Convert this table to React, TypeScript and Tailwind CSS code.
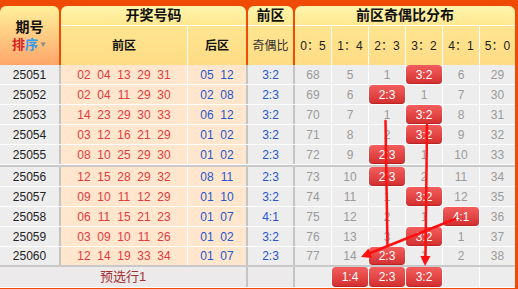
import React from 'react';

type Row = { id: string; f: string[]; b: string[]; r: string; d: (number | string)[] };

const rows: Row[] = [
  { id: '25051', f: ['02', '04', '13', '29', '31'], b: ['05', '12'], r: '3:2', d: [68, 5, 1, '3:2', 6, 29] },
  { id: '25052', f: ['02', '04', '11', '29', '30'], b: ['02', '08'], r: '2:3', d: [69, 6, '2:3', 1, 7, 30] },
  { id: '25053', f: ['14', '23', '29', '30', '33'], b: ['06', '12'], r: '3:2', d: [70, 7, 1, '3:2', 8, 31] },
  { id: '25054', f: ['03', '12', '16', '21', '29'], b: ['01', '02'], r: '3:2', d: [71, 8, 2, '3:2', 9, 32] },
  { id: '25055', f: ['08', '10', '25', '29', '30'], b: ['01', '02'], r: '2:3', d: [72, 9, '2:3', 1, 10, 33] },
  { id: '25056', f: ['12', '15', '28', '29', '32'], b: ['08', '11'], r: '2:3', d: [73, 10, '2:3', 2, 11, 34] },
  { id: '25057', f: ['09', '10', '11', '12', '29'], b: ['01', '10'], r: '3:2', d: [74, 11, 1, '3:2', 12, 35] },
  { id: '25058', f: ['06', '11', '15', '21', '23'], b: ['01', '07'], r: '4:1', d: [75, 12, 2, 1, '4:1', 36] },
  { id: '25059', f: ['03', '09', '10', '11', '26'], b: ['01', '02'], r: '3:2', d: [76, 13, 3, '3:2', 1, 37] },
  { id: '25060', f: ['12', '14', '19', '33', '34'], b: ['01', '07'], r: '2:3', d: [77, 14, '2:3', 1, 2, 38] },
];

const heads = ['0：5', '1：4', '2：3', '3：2', '4：1', '5：0'];

function Badge({ t }: { t: string }) {
  return (
    <span className="absolute inset-0 rounded-[4px] bg-linear-to-b from-[#f45d5d] to-[#d22e2e] shadow-[inset_0_-1px_0_rgba(120,0,0,0.25)] text-white text-[12px] flex items-center justify-center">
      {t}
    </span>
  );
}

function DistCells({ d }: { d: (number | string | null)[] }) {
  return (
    <>
      {d.map((v, i) => (
        <div
          key={i}
          className={
            i === 5
              ? 'w-[35px] shrink-0 relative bg-[#eeeded] flex items-center justify-center text-[12px] text-[#9a9a9a]'
              : 'w-[37px] shrink-0 relative border-r border-white bg-[#eeeded] flex items-center justify-center text-[12px] text-[#9a9a9a]'
          }
        >
          {typeof v === 'string' ? <Badge t={v} /> : v}
        </div>
      ))}
    </>
  );
}

function DataRow({ r, last }: { r: Row; last: boolean }) {
  return (
    <div className={last ? 'flex h-[18px]' : 'flex h-[20px] border-b border-white'}>
      <div className="w-[61px] shrink-0 border-r-2 border-[#c4c4c4] bg-[#eeeded] flex items-center justify-center text-[12px] text-[#222]">
        {r.id}
      </div>
      <div className="w-[127px] shrink-0 border-r border-white bg-[#ffe6cd] flex items-center justify-center text-[12px] text-[#e23b3e]">
        {r.f.map((n, i) => (
          <span key={i} className="w-[20px] text-center">{n}</span>
        ))}
      </div>
      <div className="w-[60px] shrink-0 border-r-2 border-[#c4c4c4] bg-[#ffe6cd] flex items-center justify-center text-[12px] text-[#2456d0]">
        {r.b.map((n, i) => (
          <span key={i} className="w-[20px] text-center">{n}</span>
        ))}
      </div>
      <div className="w-[47px] shrink-0 border-r-2 border-[#c4c4c4] bg-[#eeeded] flex items-center justify-center text-[12px] text-[#2456d0]">
        {r.r}
      </div>
      <DistCells d={r.d} />
    </div>
  );
}

export default function App() {
  return (
    <div className="relative w-[518px] h-[289px] overflow-hidden bg-[#ef4a06] pt-[6px] font-['Liberation_Sans','Noto_Sans_CJK_SC',sans-serif]">
      {/* header */}
      <div className="flex h-[59px]">
        <div className="w-[59px] shrink-0 rounded-t-[6px] bg-linear-to-b from-[#fff09c] to-[#ffa56a] flex flex-col items-center justify-center">
          <div className="text-[14px] font-bold text-[#111] leading-[18px]">期号</div>
          <div className="text-[13px] font-bold leading-[18px] flex items-center">
            <span className="text-[#d42424]">排</span>
            <span className="text-[#2f9cf0]">序</span>
            <span className="text-[#8a8a8a] text-[8px] ml-[1px]">▼</span>
          </div>
        </div>
        <div className="w-[2px] shrink-0" />
        <div className="w-[185px] shrink-0 flex flex-col">
          <div className="h-[20px] shrink-0 rounded-t-[6px] border-b border-white bg-linear-to-b from-[#fff5ad] to-[#ffe88f] flex items-center justify-center text-[14px] font-bold text-[#111]">
            开奖号码
          </div>
          <div className="flex-1 flex bg-linear-to-b from-[#ffe590] to-[#ffdc86]">
            <div className="w-[127px] shrink-0 border-r border-white flex items-center justify-center text-[12px] font-bold text-[#111]">前区</div>
            <div className="flex-1 flex items-center justify-center text-[12px] font-bold text-[#111]">后区</div>
          </div>
        </div>
        <div className="w-[2px] shrink-0" />
        <div className="w-[45px] shrink-0 flex flex-col">
          <div className="h-[20px] shrink-0 rounded-t-[6px] border-b border-white bg-linear-to-b from-[#fff5ad] to-[#ffe88f] flex items-center justify-center text-[14px] font-bold text-[#111]">
            前区
          </div>
          <div className="flex-1 flex items-center justify-center bg-linear-to-b from-[#ffe590] to-[#ffdc86] text-[12px] text-[#333]">奇偶比</div>
        </div>
        <div className="w-[2px] shrink-0" />
        <div className="w-[220px] shrink-0 flex flex-col">
          <div className="h-[20px] shrink-0 rounded-t-[6px] border-b border-white bg-linear-to-b from-[#fff5ad] to-[#ffe88f] flex items-center justify-center text-[14px] font-bold text-[#111]">
            前区奇偶比分布
          </div>
          <div className="flex-1 flex bg-linear-to-b from-[#ffe590] to-[#ffdc86]">
            {heads.map((h, i) => (
              <div
                key={i}
                className={
                  i === 5
                    ? 'w-[35px] shrink-0 flex items-center justify-center text-[12px] text-[#222]'
                    : 'w-[37px] shrink-0 border-r border-white flex items-center justify-center text-[12px] text-[#222]'
                }
              >
                {h}
              </div>
            ))}
          </div>
        </div>
      </div>

      {/* body */}
      <div className="w-[515px]">
        {rows.slice(0, 5).map((r) => (
          <DataRow key={r.id} r={r} last={false} />
        ))}
        <div className="h-[2px] bg-[#c9c9c9]" />
        {rows.slice(5).map((r, i) => (
          <DataRow key={r.id} r={r} last={i === 4} />
        ))}
        <div className="h-[2px] bg-[#c9c9c9]" />
        <div className="flex h-[20px]">
          <div className="w-[248px] shrink-0 border-r-2 border-[#c4c4c4] bg-[#eceaea] flex items-center justify-center text-[13px] text-[#a33030]">
            预选行1
          </div>
          <div className="w-[47px] shrink-0 border-r-2 border-[#c4c4c4] bg-[#eceaea]" />
          <DistCells d={[null, '1:4', '2:3', '3:2', null, null]} />
        </div>
        <div className="h-[1px] bg-white" />
      </div>

      {/* arrows */}
      <svg className="absolute top-0 left-0 pointer-events-none" width="518" height="289" viewBox="0 0 518 289">
        <g stroke="#ff1010" strokeWidth="2.5" fill="none" strokeLinecap="round">
          <line x1="385.5" y1="121" x2="387.5" y2="246" />
          <line x1="427" y1="125" x2="425.5" y2="257" />
          <line x1="455" y1="219" x2="369" y2="253.5" />
        </g>
        <g fill="#ff1010">
          <polygon points="425,266 420.5,256 430.5,256" />
          <polygon points="361,257 372.2,257.9 368.4,248.6" />
        </g>
      </svg>
    </div>
  );
}
